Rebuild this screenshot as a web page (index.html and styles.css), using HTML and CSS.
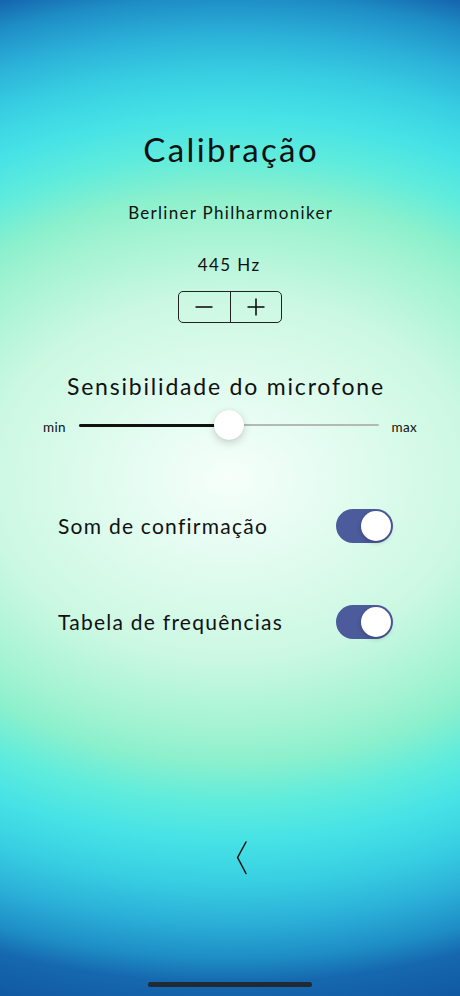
FILE: index.html
```html
<!DOCTYPE html>
<html lang="pt">
<head>
<meta charset="utf-8">
<title>Calibração</title>
<link rel="stylesheet" href="styles.css">
</head>
<body>
<main class="screen">
  <h1 class="title">Calibração</h1>
  <p class="orchestra">Berliner Philharmoniker</p>
  <p class="freq">445 Hz</p>
  <div class="stepper">
    <button class="step" aria-label="diminuir">
      <svg width="18" height="18" viewBox="0 0 18 18"><line x1="0.5" y1="9" x2="17.5" y2="9" stroke="#111" stroke-width="1.6"/></svg>
    </button>
    <button class="step" aria-label="aumentar">
      <svg width="18" height="18" viewBox="0 0 18 18"><line x1="0.5" y1="9" x2="17.5" y2="9" stroke="#111" stroke-width="1.6"/><line x1="9" y1="0.5" x2="9" y2="17.5" stroke="#111" stroke-width="1.6"/></svg>
    </button>
  </div>
  <h2 class="section">Sensibilidade do microfone</h2>
  <div class="slider-row">
    <span class="slider-label">min</span>
    <div class="slider">
      <div class="track"><div class="fill" style="width:50%"></div></div>
      <div class="thumb" style="left:50%"></div>
    </div>
    <span class="slider-label">max</span>
  </div>
  <div class="toggles">
    <div class="toggle-row">
      <span class="toggle-label">Som de confirmação</span>
      <span class="switch on"><span class="knob"></span></span>
    </div>
    <div class="toggle-row">
      <span class="toggle-label">Tabela de frequências</span>
      <span class="switch on"><span class="knob"></span></span>
    </div>
  </div>
  <div class="spacer"></div>
  <button class="back" aria-label="voltar">
    <svg width="12" height="34" viewBox="0 0 12 34"><polyline points="10,1 1.6,16.5 10,32.5" fill="none" stroke="#111" stroke-width="1.5" stroke-linecap="round" stroke-linejoin="miter"/></svg>
  </button>
  <div class="home-indicator"></div>
</main>
</body>
</html>
```
FILE: styles.css
```css
* { box-sizing: border-box; }
html, body { margin: 0; padding: 0; }
body {
  width: 460px;
  height: 996px;
  overflow: hidden;
  font-family: Lato, "Noto Sans", sans-serif;
  color: #111;
  background: radial-gradient(ellipse 680px 505px at 230px 478px,
    #f6fffb 0%,
    #e8fdf3 12%,
    #cbf8e2 36%,
    #a2f3d2 50%,
    #8cf0cc 56%,
    #60ecdc 64%,
    #46e2e6 72%,
    #38cfe2 80%,
    #2bb0d8 88%,
    #1e8ec6 95%,
    #1668ae 100%,
    #0e55a0 110%);
}
.screen {
  height: 996px;
  display: flex;
  flex-direction: column;
  align-items: center;
}
.title {
  margin: 129px 0 0;
  font-size: 33px;
  line-height: 40px;
  font-weight: 400;
  letter-spacing: 2.4px;
  text-indent: 2.4px;
}
.orchestra {
  margin: 34px 0 0;
  font-size: 17px;
  line-height: 20px;
  letter-spacing: 1.3px;
  text-indent: 1.3px;
}
.freq {
  margin: 32px 0 0 -3px;
  font-size: 17px;
  line-height: 20px;
  letter-spacing: 1.4px;
  text-indent: 1.4px;
}
.stepper {
  margin-top: 16px;
  width: 104px;
  height: 32px;
  display: flex;
  border: 1px solid #222;
  border-radius: 5px;
}
.step {
  flex: 1;
  display: flex;
  align-items: center;
  justify-content: center;
  background: none;
  border: 0;
  padding: 0;
}
.step + .step { border-left: 1px solid #222; }
.section {
  margin: 49px 0 0 -10px;
  font-size: 23px;
  line-height: 28px;
  font-weight: 400;
  letter-spacing: 1.8px;
  text-indent: 1.8px;
}
.slider-row {
  margin-top: 10px;
  width: 100%;
  height: 30px;
  padding: 0 43px;
  display: flex;
  align-items: center;
  gap: 13px;
}
.slider-label {
  font-size: 13.5px;
  line-height: 16px;
  margin-top: 3px;
  letter-spacing: 0.3px;
}
.slider {
  flex: 1;
  position: relative;
  height: 30px;
  display: flex;
  align-items: center;
}
.track {
  width: 100%;
  height: 2px;
  background: #b4b8b8;
  border-radius: 1px;
  display: flex;
  align-items: center;
}
.fill {
  height: 3px;
  background: #111;
  border-radius: 1.5px;
}
.thumb {
  position: absolute;
  top: 0;
  width: 30px;
  height: 30px;
  margin-left: -15px;
  border-radius: 50%;
  background: #fff;
  box-shadow: 0 3px 8px rgba(0, 0, 0, 0.18), 0 0 1px rgba(0, 0, 0, 0.15);
}
.toggles {
  margin-top: 69px;
  width: 100%;
  display: flex;
  flex-direction: column;
  gap: 62px;
  padding: 0 67px 0 58px;
}
.toggle-row {
  display: flex;
  align-items: center;
  justify-content: space-between;
  height: 34px;
}
.toggle-label {
  font-size: 21px;
  line-height: 26px;
  letter-spacing: 1.25px;
}
.switch {
  width: 57px;
  height: 34px;
  border-radius: 17px;
  background: #4b5b9b;
  display: flex;
  align-items: center;
  justify-content: flex-end;
  padding: 2px;
}
.knob {
  width: 30px;
  height: 30px;
  border-radius: 50%;
  background: #fff;
  box-shadow: 0 2px 5px rgba(0, 0, 0, 0.2);
}
.spacer { flex: 1; }
.back {
  background: none;
  border: 0;
  padding: 0;
  width: 12px;
  height: 34px;
  margin-left: 24px;
  display: block;
}
.back svg { display: block; }
.home-indicator {
  margin: 107px 0 9px;
  width: 164px;
  height: 5px;
  border-radius: 3px;
  background: #1f2a33;
}
```
